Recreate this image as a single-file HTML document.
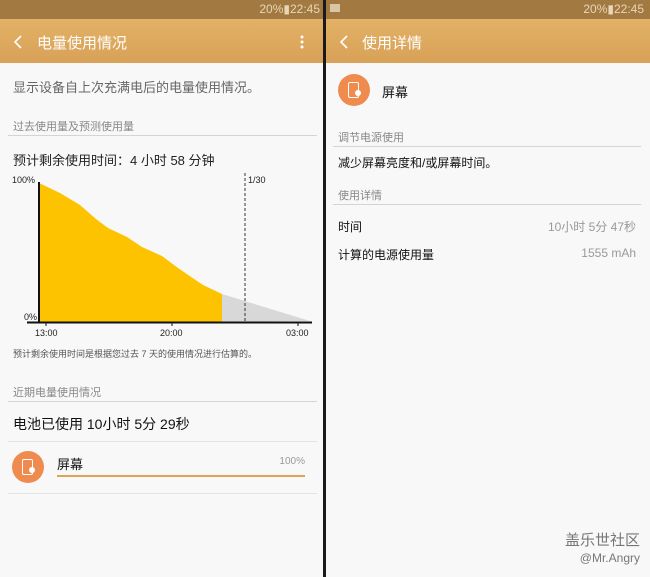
<!DOCTYPE html>
<html><head><meta charset="utf-8"><style>
*{margin:0;padding:0;box-sizing:border-box}
body{width:650px;height:577px;background:#f8f8f8;font-family:"Liberation Sans","Noto Sans CJK SC",sans-serif;position:relative;overflow:hidden}
.a{position:absolute;white-space:nowrap}
.sb{position:absolute;top:0;height:19px;background:#a27a41}
.hd{position:absolute;top:19px;height:44px;background:linear-gradient(#e2b266,#d8a158)}
.st{color:#e8d6b6;font-size:12px;top:2px}
.t{color:#fff;font-size:15px;top:32px}
.ln{position:absolute;height:1px;background:#d4d4d4}
.gh{color:#888;font-size:11px}
.ic{position:absolute;width:32px;height:32px;border-radius:50%;background:#ef8b4f}
.ic:before{content:"";position:absolute;left:10px;top:8px;width:9px;height:14px;border:1.5px solid #fff;border-radius:2px}
.ic:after{content:"";position:absolute;left:17px;top:16px;width:6px;height:6px;border-radius:50%;background:#fff}
</style></head><body>
<div class="sb" style="left:0;width:323px"></div>
<div class="sb" style="left:326px;width:324px"></div>
<div class="hd" style="left:0;width:323px"></div>
<div class="hd" style="left:326px;width:324px"></div>
<div style="position:absolute;left:323px;top:0;width:3px;height:577px;background:#1a1a1a"></div>
<div class="a st" style="right:330px">20%▮22:45</div>
<div class="a st" style="right:6px">20%▮22:45</div>
<div class="a" style="left:330px;top:4px;width:10px;height:8px;background:#d9c6a6"></div>
<svg class="a" style="left:13px;top:35px" width="10" height="14"><polyline points="8,1 2,7 8,13" fill="none" stroke="#fff" stroke-width="1.6"/></svg>
<div class="a t" style="left:37px">电量使用情况</div>
<svg class="a" style="left:299px;top:34px" width="6" height="16"><circle cx="3" cy="3" r="1.5" fill="#fff"/><circle cx="3" cy="8" r="1.5" fill="#fff"/><circle cx="3" cy="13" r="1.5" fill="#fff"/></svg>
<svg class="a" style="left:339px;top:35px" width="10" height="14"><polyline points="8,1 2,7 8,13" fill="none" stroke="#fff" stroke-width="1.6"/></svg>
<div class="a t" style="left:362px">使用详情</div>

<div class="a" style="left:13px;top:77px;font-size:13px;color:#666">显示设备自上次充满电后的电量使用情况。</div>
<div class="a gh" style="left:13px;top:118px">过去使用量及预测使用量</div>
<div class="ln" style="left:8px;top:135px;width:309px"></div>
<div class="a" style="left:13px;top:150px;font-size:13px;color:#222">预计剩余使用时间：4 小时 58 分钟</div>
<svg class="a" style="left:0;top:170px" width="323" height="172">
<polygon points="39,13 60,23 80,35 96,49 108,58 127,67 142,77 162,86 178,98 203,115 222,124 222,152 39,152" fill="#fdc300"/>
<polygon points="222,124 310,151 222,152" fill="#d8d8d8"/>
<line x1="245" y1="3" x2="245" y2="152" stroke="#333" stroke-dasharray="3,2"/>
<line x1="39" y1="12" x2="39" y2="153" stroke="#111" stroke-width="2"/>
<line x1="27" y1="152.5" x2="312" y2="152.5" stroke="#111" stroke-width="2"/>
<line x1="46" y1="153" x2="46" y2="156" stroke="#111"/><line x1="172" y1="153" x2="172" y2="156" stroke="#111"/><line x1="298" y1="153" x2="298" y2="156" stroke="#111"/>
<text x="12" y="13" font-size="9" fill="#222">100%</text>
<text x="24" y="150" font-size="9" fill="#222">0%</text>
<text x="248" y="13" font-size="9" fill="#222">1/30</text>
<text x="35" y="166" font-size="9" fill="#222">13:00</text>
<text x="160" y="166" font-size="9" fill="#222">20:00</text>
<text x="286" y="166" font-size="9" fill="#222">03:00</text>
</svg>
<div class="a" style="left:13px;top:347px;font-size:9px;color:#555">预计剩余使用时间是根据您过去 7 天的使用情况进行估算的。</div>
<div class="a gh" style="left:13px;top:384px">近期电量使用情况</div>
<div class="ln" style="left:8px;top:401px;width:309px"></div>
<div class="a" style="left:13px;top:414px;font-size:14px;color:#111">电池已使用 10小时 5分 29秒</div>
<div class="ln" style="left:8px;top:441px;width:309px;background:#e4e4e4"></div>
<div class="ic" style="left:12px;top:451px"></div>
<div class="a" style="left:57px;top:454px;font-size:13px;color:#111">屏幕</div>
<div class="a" style="right:345px;top:456px;font-size:10px;color:#999">100%</div>
<div class="a" style="left:57px;top:475px;width:248px;height:2px;background:#dea558"></div>
<div class="ln" style="left:8px;top:493px;width:309px;background:#e4e4e4"></div>

<div class="ic" style="left:338px;top:74px"></div>
<div class="a" style="left:382px;top:82px;font-size:13px;color:#111">屏幕</div>
<div class="a gh" style="left:338px;top:129px">调节电源使用</div>
<div class="ln" style="left:333px;top:146px;width:308px"></div>
<div class="a" style="left:338px;top:154px;font-size:12px;color:#111">减少屏幕亮度和/或屏幕时间。</div>
<div class="a gh" style="left:338px;top:187px">使用详情</div>
<div class="ln" style="left:333px;top:204px;width:308px"></div>
<div class="a" style="left:338px;top:218px;font-size:12px;color:#111">时间</div>
<div class="a" style="right:14px;top:218px;font-size:12px;color:#999">10小时 5分 47秒</div>
<div class="a" style="left:338px;top:246px;font-size:12px;color:#111">计算的电源使用量</div>
<div class="a" style="right:14px;top:246px;font-size:12px;color:#999">1555 mAh</div>
<div class="a" style="right:10px;top:529px;font-size:15px;color:#777">盖乐世社区</div>
<div class="a" style="right:10px;top:551px;font-size:12px;color:#777">@Mr.Angry</div>
</body></html>
